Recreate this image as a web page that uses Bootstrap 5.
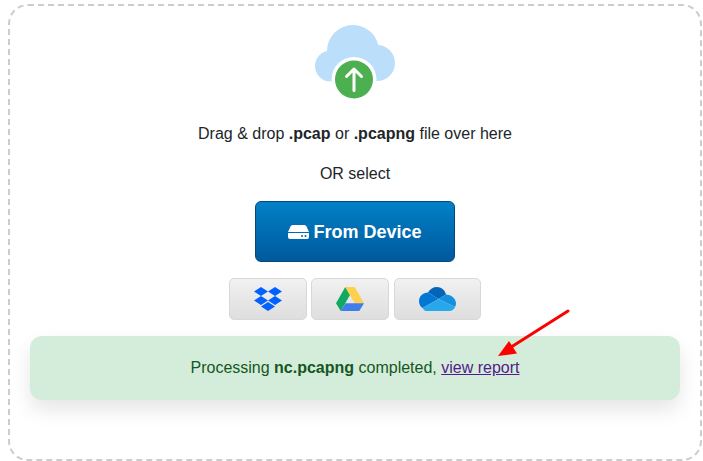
<!DOCTYPE html>
<html lang="en">
<head>
    <meta charset="UTF-8">
    <meta name="viewport" content="width=device-width, initial-scale=1.0">
    <title>Upload capture</title>
    <link href="https://cdn.jsdelivr.net/npm/bootstrap@5.3.0/dist/css/bootstrap.min.css" rel="stylesheet">
    <style>
        html, body {
            height: 461px;
            overflow: hidden;
        }
        body {
            background-color: #fff;
            color: #212529;
            font-family: "Liberation Sans", Arial, sans-serif;
            font-size: 16px;
            padding: 4px 1px 0 8px;
        }
        .drop-zone {
            position: relative;
            height: 457px;
            border: 2px dashed #ccc;
            border-radius: 20px;
            padding: 19px 20px 0;
        }
        .cloud-icon {
            display: block;
            width: 85px;
            height: 78px;
            margin-bottom: 19px;
        }
        .drop-line {
            line-height: 24px;
            margin-bottom: 16px;
        }
        .drop-line.last-line {
            margin-bottom: 15px;
        }
        .device-btn {
            width: 200px;
            height: 61px;
            color: #fff;
            font-size: 18px;
            font-weight: 700;
            background: linear-gradient(#0280c6, #00599d);
            border: 1px solid #03497f;
            border-radius: 6px;
        }
        .device-btn:hover {
            color: #fff;
            background: linear-gradient(#0280c6, #00599d);
            border-color: #03497f;
        }
        .device-label {
            padding-top: 2px;
        }
        .cloud-btn {
            width: 78px;
            height: 42px;
            padding: 0;
            background: linear-gradient(#f1f1f1, #dedede);
            border: 1px solid #d8d8d8;
            border-radius: 5px;
        }
        .cloud-btn:hover {
            background: linear-gradient(#f1f1f1, #dedede);
            border-color: #d8d8d8;
        }
        .cloud-btn.wide-btn {
            width: 87px;
            margin-left: 1px;
        }
        .cloud-row {
            gap: 4px;
            margin-top: 16px;
            margin-bottom: 16px;
        }
        .status-box {
            height: 64px;
            margin: 0;
            padding: 20px 0 0;
            text-align: center;
            color: #155724;
            background-color: #d4edda;
            border: 0;
            border-radius: 12px;
            box-shadow: 0 10px 20px rgba(0, 0, 0, .1);
        }
        .status-box a {
            color: #551a8b;
        }
        .note-arrow {
            position: absolute;
            left: 488px;
            top: 303px;
        }
    </style>
</head>
<body>
    <div class="drop-zone">
        <div class="d-flex flex-column align-items-center">
            <svg class="cloud-icon" viewBox="0 0 85 78">
                <circle cx="40" cy="26" r="26" fill="#bbdefb"/>
                <circle cx="17.500" cy="41" r="15.500" fill="#bbdefb"/>
                <circle cx="64" cy="38" r="18" fill="#bbdefb"/>
                <rect x="17" y="30" width="47" height="26" fill="#bbdefb"/>
                <circle cx="41" cy="54.500" r="22.500" fill="#fff"/>
                <circle cx="41" cy="54.500" r="19" fill="#4caf50"/>
                <path d="M41 65.500V44M33.500 51.500l7.500-7.500 7.500 7.500" fill="none" stroke="#fff" stroke-width="3" stroke-linecap="round" stroke-linejoin="round"/>
            </svg>
            <div class="drop-line">Drag &amp; drop <b>.pcap</b> or <b>.pcapng</b> file over here</div>
            <div class="drop-line last-line">OR select</div>
            <button class="btn device-btn d-flex align-items-center justify-content-center gap-1" type="button">
                <svg width="21" height="14" viewBox="0 0 21 14">
                    <path d="M5 0h11c1 0 2 .5 2.500 1.500L21 7H0L2.500 1.500C3 .5 4 0 5 0z" fill="#fff"/>
                    <path d="M0 8h21v4a2 2 0 0 1-2 2H2a2 2 0 0 1-2-2z" fill="#fff"/>
                    <circle cx="14" cy="11" r="1" fill="#0069ad"/>
                    <circle cx="17.500" cy="11" r="1" fill="#0069ad"/>
                </svg>
                <span class="device-label">From Device</span>
            </button>
            <div class="d-flex cloud-row">
                <button class="btn cloud-btn d-flex align-items-center justify-content-center" type="button" aria-label="Dropbox">
                    <svg width="28" height="24" viewBox="0 0 28 24" fill="#0061ff">
                        <path d="M7 0l7 4.500L7 9 0 4.500zM21 0l7 4.500L21 9l-7-4.500zM0 13.500L7 9l7 4.500L7 18zM21 9l7 4.500L21 18l-7-4.500zM7 19.500l7-4.500 7 4.500-7 4.500z"/>
                    </svg>
                </button>
                <button class="btn cloud-btn d-flex align-items-center justify-content-center" type="button" aria-label="Google Drive">
                    <svg width="28" height="24" viewBox="0 0 28 24">
                        <path d="M9.300 0L0 16.300 4.700 24 14 8z" fill="#11a861"/>
                        <path d="M9.300 0h9.400L28 16.300h-9.300z" fill="#ffd04b"/>
                        <path d="M4.700 24l4.700-7.700H28L23.300 24z" fill="#3f7ee8"/>
                    </svg>
                </button>
                <button class="btn cloud-btn wide-btn d-flex align-items-center justify-content-center" type="button" aria-label="OneDrive">
                    <svg width="37" height="24" viewBox="0 0 37 24">
                        <path d="M9 5.500C11 2 14 0 18 0c4 0 8 3 9 7.500L19.500 12z" fill="#0364b8"/>
                        <path d="M9 5.500C4 5.500 0 9.500 0 14c0 3 1.200 5.500 3.500 7L19.500 12z" fill="#0078d4"/>
                        <path d="M27 7.500c5 0 10 4 10 9 0 1-.2 2-1 3.500L19.500 12z" fill="#1490df"/>
                        <path d="M3.500 21l16-9L36 20c-1 2.500-3 4-6 4H7c-1.500 0-2.500-2-3.500-3z" fill="#28a8ea"/>
                    </svg>
                </button>
            </div>
        </div>
        <div class="alert status-box" role="alert">
            Processing <b>nc.pcapng</b> completed, <a href="#">view report</a>
        </div>
        <svg class="note-arrow" width="84" height="56" viewBox="0 0 84 56">
            <path d="M70 2L14 37.500" stroke="#f00" stroke-width="3" stroke-linecap="round"/>
            <path d="M0 47L11 32l8 12.500z" fill="#f00"/>
        </svg>
    </div>
    <script src="https://cdn.jsdelivr.net/npm/bootstrap@5.3.0/dist/js/bootstrap.bundle.min.js"></script>
</body>
</html>
